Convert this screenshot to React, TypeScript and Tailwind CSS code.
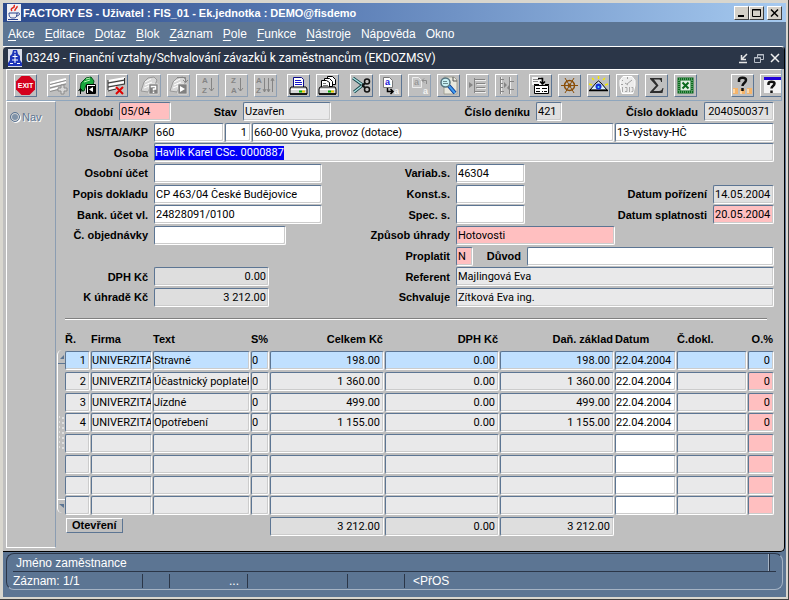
import React from 'react';

type FieldProps = {
  id: string;
  label?: string;
  value?: string;
  labelClass?: string;
  inputClass?: string;
};

const box =
  "h-[19px] rounded-[2px] border border-t-[#5c7593] border-l-[#5c7593] border-r-white border-b-white font-[Roboto,'Liberation_Sans',sans-serif] shadow-[inset_-1px_-1px_0_#cccccc]";

function Field({ id, label, value = '', labelClass = '', inputClass = 'bg-white' }: FieldProps) {
  return (
    <>
      {label && (
        <label htmlFor={id} className={`shrink-0 pr-[6px] text-right font-bold whitespace-nowrap ${labelClass}`}>
          {label}
        </label>
      )}
      <input id={id} aria-label={label ?? id} defaultValue={value} className={`${box} min-w-0 px-px outline-none ${inputClass}`} />
    </>
  );
}

function ToolButton({ title, children, disabled }: { title: string; children: React.ReactNode; disabled?: boolean }) {
  return (
    <button
      type="button"
      aria-label={title}
      disabled={disabled}
      className={`h-[23px] w-[23px] shrink-0 rounded-[1px] border border-t-white border-l-white ${
        disabled ? 'border-r-[#8fa0b4] border-b-[#8fa0b4]' : 'border-r-[#5c7593] border-b-[#5c7593]'
      }`}
    >
      <svg viewBox="0 0 21 21" width="21" height="21" fill="none">
        {children}
      </svg>
    </button>
  );
}

// Letters with an arrow, used by the sort buttons
function SortIcon({ top, bottom, all }: { top: string; bottom: string; all?: boolean }) {
  return (
    <>
      <g fill="#858585" fontFamily="Liberation Sans" fontSize="8" fontWeight="bold">
        <text x={all ? 1 : 5} y="8">{top}</text>
        <text x={all ? 1 : 5} y="18">{bottom}</text>
      </g>
      <g stroke="#858585">
        {all ? (
          <path d="M9.500 3v14M8 14l1.500 3 1.500-3M13.500 3v14M12 14l1.500 3 1.500-3M17.500 3v14M16 6l1.500-3 1.500 3" />
        ) : (
          <path d="M14.500 3v13M12 13l2.500 3 2.500-3" />
        )}
      </g>
    </>
  );
}

const Exit = () => (
  <>
    <path d="M6.500 1h8L20 6.500v8L14.500 20h-8L1 14.500v-8z" fill="#d4001c" />
    <text x="10.5" y="13" fill="#fff" fontFamily="Liberation Sans" fontWeight="bold" fontSize="7" textAnchor="middle">EXIT</text>
  </>
);

const NewRow = () => (
  <>
    <path d="M2 8l16-4M2 11l16-4M2 15l8-2" stroke="#fff" strokeWidth="2" />
    <path d="M2 9.500l16-4M2 13l16-4M2 16.500l8-2" stroke="#8c8c8c" />
    <path d="M13 10h3v3h3v3h-3v3h-3v-3h-3v-3h3z" fill="#d8d8d8" stroke="#8c8c8c" />
  </>
);

const Insert = () => (
  <>
    <path d="M4 8l5-5 5-1 3 4-1 4H9l-2 6H3z" fill="#18a83c" stroke="#064d1a" />
    <path d="M9 4l4-1M7 7l6-2" stroke="#b6f5b0" />
    <path d="M3.500 19v-5M1.500 16l2-2.500 2 2.500" stroke="#000" />
    <path d="M9.500 9.500h9v9h-9z" fill="#fff" stroke="#000" />
    <path d="M11 11h7v7h-7z" fill="#000" />
    <path d="M16 12v5l-4-2.500z" fill="#fff" />
  </>
);

const DeleteRow = () => (
  <>
    <path d="M2 6l17-3M2 10l17-3M2 14l9-2" stroke="#fff" strokeWidth="2" />
    <path d="M2 8l17-3M2 12l17-3M2 16l8-2M2 5v10M18.500 3v6" stroke="#333" />
    <path d="M10 12l7 7M17 12l-7 7" stroke="#e00000" strokeWidth="2" />
  </>
);

const Folder = ({ run }: { run?: boolean }) => (
  <>
    <path d="M2 16l3-9 4-4 6-1 3 3-2 5-5 2-2 5z" fill="#d6d6d6" stroke="#999" />
    <path d="M6 7l6-3M6 10l7-3M5 13l5-2" stroke="#fff" />
    {run && <path d="M9 2.500h8.500V7M15 5l2.500 2.500L20 5" stroke="#858585" />}
    <path d="M10 9h9v10h-9z" fill="#808080" stroke="#fff" strokeWidth=".5" />
    {run ? (
      <path d="M12 11v6l5-3z" fill="#fff" />
    ) : (
      <path d="M12.500 12.500v-1h4v2.500h-2v1.500M14.500 16.500v1.500" stroke="#fff" strokeWidth="1.500" />
    )}
  </>
);

const Printer = ({ many }: { many?: boolean }) => (
  <>
    {many && (
      <g fill="#fff" stroke="#000">
        <path d="M10.500 1.500h5l3 3v5h-8z" />
        <path d="M7.500 3.500h5l3 3v5h-8z" />
      </g>
    )}
    {many ? <path d="M4.500 5.500h5l3 2v5h-8z" fill="#fff" stroke="#000" /> : <path d="M5.500 2.500h8l2 2v8h-10z" fill="#fff" stroke="#0a0a8c" />}
    <path d={many ? 'M6 8.500h3M6 10.500h5' : 'M7 5.500h6M7 7.500h7M7 9.500h7'} stroke={many ? '#777' : '#1414c8'} />
    <path d="M3 12h15l1 2v5H2v-5z" fill="#d8d8d8" stroke="#000" />
    <path d="M3 14.500h15" stroke="#fff" />
    <path d="M11 15.500h3v2h-3z" fill="#00b000" />
    <path d="M14 15.500h3v2h-3z" fill="#e8c800" />
    <path d="M2 19h17" stroke="#000" strokeWidth="1.500" />
  </>
);

const Scissors = () => (
  <>
    <path d="M2 3l11 8M3 17l10-8" stroke="#17454a" strokeWidth="3" />
    <path d="M2 3l10 7M3 17l9-7" stroke="#a9e0e2" strokeWidth="1.500" />
    <circle cx="16" cy="6.500" r="2.500" stroke="#111" strokeWidth="1.500" />
    <circle cx="16" cy="14.500" r="2.500" stroke="#111" strokeWidth="1.500" />
    <path d="M11 10.500l3-2M11 10.500l3 2" stroke="#111" strokeWidth="2" />
  </>
);

const Copy = ({ paste }: { paste?: boolean }) => (
  <>
    <path d="M3.500 2.500h6l3 3v7h-9z" fill={paste ? '#c8c8c8' : '#fff'} stroke={paste ? '#ececec' : '#777'} />
    <g fontFamily="Liberation Sans" fontSize="9" fontWeight="bold">
      <text x="5" y="10" fill={paste ? '#999' : '#1616d8'}>a</text>
      <text x="14" y="19" fill="#f2f2f2">a</text>
    </g>
    {paste ? (
      <path d="M17.500 9V5.500H13M15 3.500l-2 2 2 2" stroke="#8c8c8c" />
    ) : (
      <path d="M7.500 13v3.500H13M10.500 14l2.500 2.500-2.500 2.500" stroke="#000" strokeWidth="1.500" />
    )}
  </>
);

const Search = () => (
  <>
    <path d="M6 2h10l3 3v14H6z" fill="#e8e8de" stroke="#a0a094" />
    <path d="M15 2v4h4" stroke="#555" />
    <path d="M11 11l6 7" stroke="#0c3c96" strokeWidth="4" />
    <path d="M11 11l6 7" stroke="#3f9cf0" strokeWidth="2" />
    <circle cx="7.500" cy="7.500" r="4.500" fill="#c8f0f4" stroke="#54727e" strokeWidth="1.500" />
    <path d="M5 6.500h4M5 8.500h5" stroke="#6a8a8e" />
  </>
);

const Indent = () => (
  <>
    <path d="M8 5.500h11M10 9.500h9M10 13.500h9M8 17.500h11" stroke="#eee" />
    <path d="M7.500 3v15M7 4.500h11M9 8.500h9M9 12.500h9M7 16.500h11" stroke="#858585" />
    <path d="M2 7l4 3-4 3z" fill="#858585" />
  </>
);

const Tree = () => (
  <>
    <path d="M5.500 2v17M14.500 2v17" stroke="#eee" />
    <path d="M4.500 2v17M4 4.500h4M4 8.500h3M4 12.500h3M4 16.500h4M13.500 2v17M14 6.500h4M14 14.500h4" stroke="#858585" />
    <path d="M8 7l3 3-3 3zM13 10l-2 3 2 2z" fill="#858585" />
  </>
);

const Form = () => (
  <>
    <path d="M2 2h9v8H2z" fill="#f4f4f4" />
    <path d="M3 4.500h6M3 6.500h5" stroke="#8a8a8a" />
    <path d="M8 3.500h4.500V8M10 6.500l2.500 2.500L15 6.500" stroke="#000" strokeWidth="1.500" />
    <path d="M4.500 10.500h14v8h-14z" fill="#fff" stroke="#000" />
    <path d="M4 9.500h5M15 9.500h4M6 13.500h4M6 16.500h4M12 13.500h5M12 16.500h1M14 16.500h3" stroke="#000" />
  </>
);

const Wheel = () => (
  <>
    <circle cx="10.500" cy="10.500" r="5" stroke="#8a4e08" strokeWidth="1.500" />
    <circle cx="10.500" cy="10.500" r="1.500" fill="#c98a26" stroke="#8a4e08" />
    <path d="M2 10.500h17M6 3l9 15M15 3L6 18" stroke="#8a4e08" />
  </>
);

const Eye = () => (
  <>
    <path d="M10.500 1v3M4 3l2 2M17 3l-2 2M1 9l3 1M20 9l-3 1" stroke="#f4e800" strokeWidth="1.500" />
    <path d="M2 15l6-7 2.500-2L13 8l6 7z" fill="#dbeeff" stroke="#000" />
    <path d="M1 15.500h19" stroke="#000" strokeWidth="1.500" />
    <circle cx="10.500" cy="11.500" r="3" fill="#1430d8" />
    <circle cx="10.500" cy="12" r="1" fill="#58e8f8" />
  </>
);

const Gauge = () => (
  <>
    <path d="M6 1.500h9l3 4v5l-2 8H5l-2-8v-5z" fill="#ececec" stroke="#fff" />
    <path d="M10 9l5-4M8 8l3 2M10.500 2v2M5 5l1 1M4 9.500h2" stroke="#a0a0a0" />
    <path d="M5.500 12v5M8 12.500h2v4H8M12.500 12v5M14.500 12.500h1.500v4h-1.500" stroke="#a8a8a8" />
  </>
);

const Sum = () => (
  <path d="M4 3h12v4h-1c0-2-1-2.500-3-2.500H8l4.500 6L7.500 16H13c2 0 3-1 3.500-3h1l-1 5H4v-1l6-6.500L4 4z" fill="#2d2d2d" />
);

const Sheet = () => (
  <>
    <path d="M4 4h13v13H4z" fill="#e4efe4" stroke="#0b6a1e" strokeWidth="3" />
    <path d="M4 4h13v13H4z" stroke="#9ccaa2" strokeWidth="1" strokeDasharray="1 1" />
    <path d="M7.500 7.500l6 6M13.500 7.500l-6 6" stroke="#0b6a1e" strokeWidth="2" />
  </>
);

const People = () => (
  <>
    <path d="M1 13h5v6H1zM8 14h5v5H8zM15 13h5v6h-5z" fill="#f5b46a" />
    <path d="M2 14v4M9 16v3M16 14v4" stroke="#ffe4be" strokeWidth="1.500" />
    <path d="M7 7V5c0-3 7-3 7 0 0 3-3.500 3-3.500 6M10.500 13v3" stroke="#111" strokeWidth="2.500" />
  </>
);

const Help = () => (
  <>
    <path d="M3 3h18v15H3z" fill="#f4f4f4" />
    <path d="M3 3.500h18" stroke="#2000d8" strokeWidth="3" />
    <path d="M7.500 10V8.500c0-2.500 6-2.500 6 0 0 2.500-3 2.500-3 5M10.500 15.500V18" stroke="#111" strokeWidth="2.500" />
  </>
);

const menu = [
  ['', 'A', 'kce'],
  ['', 'E', 'ditace'],
  ['', 'D', 'otaz'],
  ['', 'B', 'lok'],
  ['', 'Z', 'áznam'],
  ['', 'P', 'ole'],
  ['', 'F', 'unkce'],
  ['', 'N', 'ástroje'],
  ['Náp', 'o', 'věda'],
  ['Okno', '', ''],
];

const rows = [
  ['1', 'UNIVERZITA', 'Stravné', '0', '198.00', '0.00', '198.00', '22.04.2004', '', '0'],
  ['2', 'UNIVERZITA', 'Účastnický poplatek', '0', '1 360.00', '0.00', '1 360.00', '22.04.2004', '', '0'],
  ['3', 'UNIVERZITA', 'Jízdné', '0', '499.00', '0.00', '499.00', '22.04.2004', '', '0'],
  ['4', 'UNIVERZITA', 'Opotřebení', '0', '1 155.00', '0.00', '1 155.00', '22.04.2004', '', '0'],
  ...Array.from({ length: 4 }, () => Array(10).fill('')),
];

const columns = [
  { title: 'Ř.', width: 'w-[26px]', right: true },
  { title: 'Firma', width: 'w-[62px]' },
  { title: 'Text', width: 'w-[98px]' },
  { title: 'S%', width: 'w-[19px]' },
  { title: 'Celkem Kč', width: 'w-[115px]', right: true },
  { title: 'DPH Kč', width: 'w-[115px]', right: true },
  { title: 'Daň. základ', width: 'w-[115px]', right: true },
  { title: 'Datum', width: 'w-[62px]' },
  { title: 'Č.dokl.', width: 'w-[71px]' },
  { title: 'O.%', width: 'w-[27px]', right: true },
];

function cellColor(row: number, col: number) {
  if (row === 0) return 'bg-[#c0e0ff]';
  if (col === 7) return 'bg-white';
  if (col === 9) return 'bg-[#ffbfc0]';
  return 'bg-[#e9e9ea]';
}

function DetailTable() {
  return (
    <table className="h-[206px] w-full table-fixed border-collapse">
      <thead>
        <tr className="h-[21px]">
          {columns.map((c, i) => (
            <th
              key={c.title}
              className={`${c.width} p-0 pb-1 font-bold whitespace-nowrap ${c.right && i > 0 ? 'pr-[2px] text-right' : 'text-left'}`}
            >
              {c.title}
            </th>
          ))}
        </tr>
      </thead>
      <tbody>
        {rows.map((row, r) => (
          <tr key={r}>
            {row.map((text, c) => (
              <td key={c} className="p-0 pr-px align-top">
                <div className={`${box} overflow-hidden leading-[17px] whitespace-nowrap ${cellColor(r, c)} ${columns[c].right ? 'pr-[3px] text-right' : ''}`}>
                  {text}
                </div>
              </td>
            ))}
          </tr>
        ))}
      </tbody>
      <tfoot>
        <tr>
          <td colSpan={4} className="p-0 align-top">
            <button type="button" className="mt-px ml-px h-[15px] border border-t-white border-l-white border-r-[#5c7593] border-b-[#5c7593] px-[5px] leading-[13px] font-bold">
              Otevření
            </button>
          </td>
          {['3 212.00', '0.00', '3 212.00'].map((sum, i) => (
            <td key={i} className="p-0 pr-px align-top">
              <div className={`${box} bg-[#dedede] pr-[3px] text-right leading-[17px]`}>{sum}</div>
            </td>
          ))}
          <td colSpan={3} />
        </tr>
      </tfoot>
    </table>
  );
}

function HeaderForm() {
  const row = 'flex items-center';
  const first = 'w-[98px]';
  return (
    <form className="flex h-[205px] flex-col justify-between">
      <div className={row}>
        <Field id="obdobi" label="Období" value="05/04" labelClass="w-[63px]" inputClass="w-[52px] bg-[#ffbfc0]" />
        <Field id="stav" label="Stav" value="Uzavřen" labelClass="w-[72px]" inputClass="w-[88px] bg-[#e9e9ea]" />
        <Field id="denik" label="Číslo deníku" value="421" labelClass="w-[205px]" inputClass="w-[26px] bg-[#e0e0e0]" />
        <Field id="doklad" label="Číslo dokladu" value="2040500371" labelClass="flex-1" inputClass="w-[70px] bg-[#e0e0e0] pr-[3px] text-right" />
      </div>
      <div className={row}>
        <Field id="ns" label="NS/TA/A/KP" value="660" labelClass={first} inputClass="mr-px w-[70px] bg-white" />
        <Field id="ta" value="1" inputClass="mr-px w-[26px] bg-white pr-[3px] text-right" />
        <Field id="akce" value="660-00 Výuka, provoz (dotace)" inputClass="mr-px flex-1 bg-white" />
        <Field id="kp" value="13-výstavy-HČ" inputClass="w-[159px] bg-white" />
      </div>
      <div className={row}>
        <label htmlFor="osoba" className="w-[98px] shrink-0 pr-[6px] text-right font-bold">Osoba</label>
        <div className={`${box} flex flex-1 items-center bg-[#e9e9ea]`}>
          <input id="osoba" defaultValue="Havlík Karel CSc. 0000887" className="field-sizing-content h-[14px] bg-[#0000f8] text-white outline-none" />
        </div>
      </div>
      <div className={row}>
        <Field id="osucet" label="Osobní účet" labelClass={first} inputClass="w-[168px] bg-white" />
        <Field id="vs" label="Variab.s." value="46304" labelClass="w-[134px]" inputClass="w-[69px] bg-white" />
      </div>
      <div className={row}>
        <Field id="popis" label="Popis dokladu" value="CP 463/04 České Budějovice" labelClass={first} inputClass="w-[168px] bg-white" />
        <Field id="ks" label="Konst.s." labelClass="w-[134px]" inputClass="w-[69px] bg-white" />
        <Field id="porizeni" label="Datum pořízení" value="14.05.2004" labelClass="flex-1" inputClass="w-[61px] bg-[#e0e0e0]" />
      </div>
      <div className={row}>
        <Field id="ucet" label="Bank. účet vl." value="24828091/0100" labelClass={first} inputClass="w-[168px] bg-white" />
        <Field id="ss" label="Spec. s." labelClass="w-[134px]" inputClass="w-[69px] bg-white" />
        <Field id="splatnost" label="Datum splatnosti" value="20.05.2004" labelClass="flex-1" inputClass="w-[61px] bg-[#ffbfc0]" />
      </div>
      <div className={row}>
        <Field id="objednavka" label="Č. objednávky" labelClass={first} inputClass="w-[132px] bg-white" />
        <Field id="uhrada" label="Způsob úhrady" value="Hotovosti" labelClass="w-[170px]" inputClass="w-[159px] bg-[#ffbfc0]" />
      </div>
      <div className={row}>
        <Field id="proplatit" label="Proplatit" value="N" labelClass="w-[400px]" inputClass="w-[17px] bg-[#ffbfc0]" />
        <Field id="duvod" label="Důvod" labelClass="w-[54px]" inputClass="flex-1 bg-white" />
      </div>
      <div className={row}>
        <Field id="dph" label="DPH Kč" value="0.00" labelClass={first} inputClass="w-[115px] bg-[#dedede] pr-[2px] text-right" />
        <Field id="referent" label="Referent" value="Majlingová Eva" labelClass="w-[187px]" inputClass="flex-1 bg-[#e9e9ea]" />
      </div>
      <div className={row}>
        <Field id="kuhrade" label="K úhradě Kč" value="3 212.00" labelClass={first} inputClass="w-[115px] bg-[#dedede] pr-[2px] text-right" />
        <Field id="schvaluje" label="Schvaluje" value="Zítková Eva ing." labelClass="w-[187px]" inputClass="flex-1 bg-[#e9e9ea]" />
      </div>
    </form>
  );
}

function TitleBar() {
  const btn =
    'flex h-[14px] w-[15px] items-center justify-center border border-t-white border-l-white border-r-[#404040] border-b-[#404040] bg-[#d4d0c8]';
  return (
    <header className="flex h-[19px] items-center bg-linear-to-r from-[#2c4a8c] to-[#a6caf0] pr-[4px] pl-[3px] text-white">
      <svg viewBox="0 0 16 18" width="16" height="18" fill="none">
        <path d="M1 0h14v17H1z" fill="#f0f0f4" />
        <path d="M6 7c-3-3 4-3 2-6M9 7c-1-2 3-3 2-5" stroke="#e02418" strokeWidth="1.500" />
        <path d="M3 9h8c0 5-2 5-4 5s-4 0-4-5zM11 9c4-1 3 3-1 3M2 15.500h10" stroke="#27408c" />
      </svg>
      <h1 className="ml-px flex-1 text-[11px] font-bold whitespace-nowrap">FACTORY ES - Uživatel : FIS_01 - Ek.jednotka : DEMO@fisdemo</h1>
      <button type="button" aria-label="Minimalizovat" className={btn}>
        <svg viewBox="0 0 11 10" width="11" height="10"><path d="M2 7h6v2H2z" /></svg>
      </button>
      <button type="button" aria-label="Maximalizovat" className={btn}>
        <svg viewBox="0 0 11 10" width="11" height="10" fill="none" stroke="#000"><path d="M1.500 1.500h8v7h-8zM1 2h9" /></svg>
      </button>
      <button type="button" aria-label="Zavřít" className={`${btn} ml-[3px]`}>
        <svg viewBox="0 0 11 10" width="11" height="10" fill="none" stroke="#000" strokeWidth="1.500"><path d="M2 1.500l7 7M9 1.500l-7 7" /></svg>
      </button>
    </header>
  );
}

function Toolbar() {
  return (
    <div className="mr-[2px] ml-[3px] flex h-8 items-center gap-[6px] overflow-hidden border-t border-r border-b border-l border-t-white border-r-[#8fa6bd] border-b-[#8fa6bd] border-l-white pl-[7px]">
      <ToolButton title="Konec"><Exit /></ToolButton>
      <div className="ml-1 flex shrink-0 gap-[6px]">
        <ToolButton title="Nový záznam" disabled><NewRow /></ToolButton>
        <ToolButton title="Vložit"><Insert /></ToolButton>
        <ToolButton title="Smazat"><DeleteRow /></ToolButton>
      </div>
      <div className="ml-1 flex shrink-0 gap-[6px]">
        <ToolButton title="Zadat dotaz" disabled><Folder /></ToolButton>
        <ToolButton title="Provést dotaz" disabled><Folder run /></ToolButton>
        <ToolButton title="Řadit vzestupně" disabled><SortIcon top="A" bottom="Z" /></ToolButton>
        <ToolButton title="Řadit sestupně" disabled><SortIcon top="Z" bottom="A" /></ToolButton>
        <ToolButton title="Řazení" disabled><SortIcon top="A" bottom="Z" all /></ToolButton>
      </div>
      <div className="ml-1 flex shrink-0 gap-[6px]">
        <ToolButton title="Tisk"><Printer /></ToolButton>
        <ToolButton title="Tisk sestav"><Printer many /></ToolButton>
      </div>
      <div className="ml-[5px] flex shrink-0 gap-[6px]">
        <ToolButton title="Vyjmout"><Scissors /></ToolButton>
        <ToolButton title="Kopírovat"><Copy /></ToolButton>
        <ToolButton title="Vložit text" disabled><Copy paste /></ToolButton>
        <ToolButton title="Hledat"><Search /></ToolButton>
        <ToolButton title="Odsadit" disabled><Indent /></ToolButton>
        <ToolButton title="Strom" disabled><Tree /></ToolButton>
      </div>
      <div className="ml-[5px] flex shrink-0 gap-[6px]">
        <ToolButton title="Formulář"><Form /></ToolButton>
        <ToolButton title="Nastavení"><Wheel /></ToolButton>
        <ToolButton title="Náhled"><Eye /></ToolButton>
        <ToolButton title="Měřidlo" disabled><Gauge /></ToolButton>
        <ToolButton title="Součet"><Sum /></ToolButton>
        <ToolButton title="Export"><Sheet /></ToolButton>
      </div>
      <div className="ml-7 flex gap-[6px]">
        <ToolButton title="Uživatelé"><People /></ToolButton>
        <ToolButton title="Pomoc"><Help /></ToolButton>
      </div>
    </div>
  );
}

function ScrollBar() {
  return (
    <div className="mt-[20px] mr-px flex h-[163px] w-[7px] shrink-0 flex-col justify-between rounded-l-[5px] border-l border-white">
      <svg viewBox="0 0 7 14" width="7" height="14">
        <path d="M6 5v4H2z" fill="#5c7593" />
        <path d="M0 13.500h7" stroke="#5c7593" />
      </svg>
      <svg viewBox="0 0 7 34" width="7" height="34">
        {[2, 7, 12, 17, 22, 27, 32].map((y) => (
          <path key={y} d={`M1 ${y}h1M4 ${y + 1}h2`} stroke="#fff" />
        ))}
      </svg>
      <svg viewBox="0 0 7 14" width="7" height="14">
        <path d="M0 .5h7" stroke="#fff" />
        <path d="M1 5h5v4z" fill="#5c7593" />
      </svg>
    </div>
  );
}

export default function App() {
  return (
    <div className="flex min-h-screen flex-col border-r border-b border-[#404040] bg-[#d8d6ce] pt-[3px] pr-[2px] pb-[2px] pl-[3px] font-['Liberation_Sans',Arial,sans-serif] text-[11px] leading-[14px] text-black">
      <TitleBar />
      <nav className="flex h-6 items-center gap-[10px] bg-[#5c7593] px-[5px] text-[12px] text-white">
        {menu.map(([before, key, after]) => (
          <button key={before + key + after} type="button" className="whitespace-nowrap">
            {before}
            <span className="underline underline-offset-2">{key}</span>
            {after}
          </button>
        ))}
      </nav>

      <div className="flex flex-1 flex-col bg-[#5c7593]">
        {/* Vnitřní okno formuláře */}
        <main className="mr-px flex flex-1 flex-col overflow-hidden rounded-tr-[4px] rounded-br-[5px] border-t border-r border-b border-t-white border-r-black border-b-black bg-[#bfbfbf]">
          <div className="flex h-[22px] items-center rounded-tl-[4px] bg-[#2b3648] pr-[3px] pl-1 text-white">
            <svg viewBox="0 0 16 18" width="16" height="18" fill="none">
              <path d="M1 0h14v18H1z" fill="#d8dce8" />
              <path d="M6 1h4l1 4 2 2v4l2 3v3H1v-3l2-3V7l2-2z" fill="#1c34b8" />
              <path d="M7 3h2M5.500 7.500h5M5 11h6M3 14.500h3M10 14.500h3M8 5v9" stroke="#fff" />
            </svg>
            <h2 className="ml-[3px] flex-1 font-[Roboto,'Liberation_Sans',sans-serif] text-[12px] whitespace-nowrap">
              03249 - Finanční vztahy/Schvalování závazků k zaměstnancům (EKDOZMSV)
            </h2>
            <div className="flex gap-1">
              <button type="button" aria-label="Minimalizovat formulář">
                <svg viewBox="0 0 12 12" width="12" height="12" fill="none" stroke="#e6e6e6" strokeWidth="1.500"><path d="M10 2L5 7M4.500 3v4.500H9M2 10.500h8" /></svg>
              </button>
              <button type="button" aria-label="Obnovit formulář">
                <svg viewBox="0 0 12 12" width="12" height="12" fill="none" stroke="#b8bec8"><path d="M4.500 5V2.500h6v5H8M1.500 5.500h6v5h-6zM4 3h7M1 6h7" /></svg>
              </button>
              <button type="button" aria-label="Zavřít formulář">
                <svg viewBox="0 0 12 12" width="12" height="12" fill="none" stroke="#f0f0f0" strokeWidth="1.500"><path d="M2 2l8 8M10 2l-8 8" /></svg>
              </button>
            </div>
          </div>
          <Toolbar />

          <div className="flex flex-1">
            <aside className="mb-[3px] ml-[3px] w-[50px] shrink-0 border border-t-white border-r-[#8b9db2] border-b-white border-l-white px-[3px] pt-[8px]">
              <label className="flex items-center gap-[2px] text-[#5c7593] [text-shadow:1px_1px_0_#fff]">
                <input
                  type="radio"
                  disabled
                  checked
                  readOnly
                  className="h-[10px] w-[10px] appearance-none rounded-full border border-[#5c7593] bg-[#7f93a9] shadow-[inset_0_0_0_1px_#d8d8d8,1px_1px_0_#fff]"
                />
                Nav
              </label>
            </aside>

            <div className="min-w-0 flex-1 pr-[10px]">
              <div className="pt-px">
                <HeaderForm />
              </div>
              <hr className="mt-[11px] mr-[7px] ml-[9px] h-[2px] border-0 border-t border-t-[#808080] bg-white" />
              <div className="mt-[10px] flex pl-px">
                <ScrollBar />
                <DetailTable />
              </div>
            </div>
          </div>
        </main>

        <footer className="mx-[3px] mt-px mb-[7px] rounded-[8px] border border-t-[#2b3648] border-r-[#a5b3c4] border-b-[#a5b3c4] border-l-[#2b3648] px-[6px] text-[12px] text-white">
          <div className="flex h-[18px] items-center border-b border-[#2b3648] pl-[3px]">
            <span className="flex-1">Jméno zaměstnance</span>
            <span className="mr-[6px] h-[17px] border-r border-l border-l-[#a5b3c4] border-r-[#2b3648]" />
          </div>
          <div className="flex h-[17px] items-center [&>span]:flex [&>span]:h-[14px] [&>span]:items-center [&>span]:border-r [&>span]:border-[#2b3648]">
            <span className="w-[130px]">Záznam: 1/1</span>
            <span className="w-[27px]" />
            <span className="w-[78px] justify-end pr-[8px]">...</span>
            <span className="w-[100px]" />
            <span className="w-[57px]" />
            <p className="pl-[8px]">&lt;PřOS</p>
          </div>
        </footer>
      </div>
    </div>
  );
}
